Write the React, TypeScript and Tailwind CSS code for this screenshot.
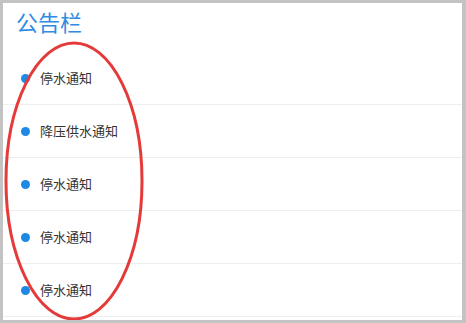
import React from "react";

const items = ["停水通知", "降压供水通知", "停水通知", "停水通知", "停水通知"];

export default function App() {
  return (
    <div
      className="relative w-[466px] h-[323px] bg-white border-t-[3px] border-l-[3px] border-b-[3px] border-r-[4px] border-[#c3c3c3] overflow-hidden"
      style={{ fontFamily: '"Noto Sans CJK SC", "Noto Sans", sans-serif' }}
    >
      <div className="h-[49px] pl-[13px] pt-[3px]">
        <h1 className="text-[22px] leading-[30px] text-[#2f8be3] font-normal">公告栏</h1>
      </div>
      <ul className="flex flex-col">
        {items.map((t, i) => (
          <li
            key={i}
            className="h-[53px] flex items-center border-b border-[#eeeeee] pl-[18px]"
          >
            <span className="w-[9px] h-[9px] rounded-full bg-[#1e88e5] mr-[10px]" />
            <span className="text-[13px] text-[#333333]">{t}</span>
          </li>
        ))}
      </ul>
      <svg
        className="absolute left-[-3px] top-[-3px] pointer-events-none"
        width="466"
        height="323"
        viewBox="0 0 466 323"
      >
        <ellipse
          cx="74"
          cy="181"
          rx="68"
          ry="138"
          fill="none"
          stroke="#e53a3a"
          strokeWidth="3"
        />
      </svg>
    </div>
  );
}
